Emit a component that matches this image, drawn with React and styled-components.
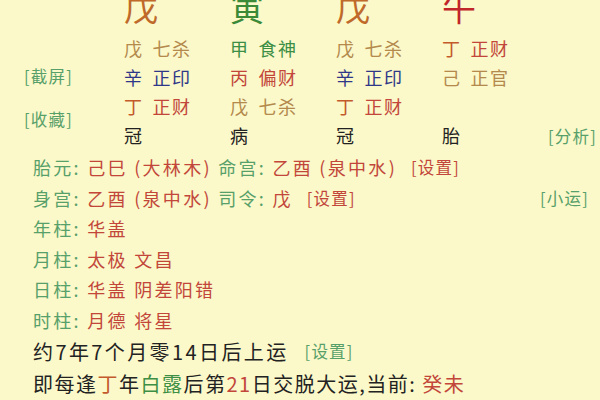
import React from 'react';
import styled, { createGlobalStyle } from 'styled-components';

const C = {
  bg: '#fbf8c9',
  green: '#57a06a',
  deepGreen: '#3d8f45',
  red: '#c2463a',
  orange: '#c25a2c',
  brown: '#b3894c',
  blue: '#2f3788',
  black: '#222222',
  headOrange: '#bf6a2a',
  headGreen: '#3b8a38',
  headRed: '#c0262a',
};

const Global = createGlobalStyle`
  html, body { margin: 0; padding: 0; background: ${C.bg}; }
  body {
    width: 600px; height: 400px; overflow: hidden;
    font-family: "Noto Sans CJK SC", "Noto Sans", sans-serif;
  }
`;

const Page = styled.div`
  width: 600px;
  height: 400px;
  overflow: hidden;
  background: ${C.bg};
`;

const Chart = styled.div`
  display: grid;
  grid-template-columns: 100px repeat(4, 106px) 1fr;
  grid-template-rows: 44px repeat(4, 29px);
  padding: 0 11px 0 24px;
  margin-top: -10px;
`;

const Head = styled.div`
  font-size: 34px;
  line-height: 34px;
  color: ${(p) => p.$c};
  grid-row: 1;
  grid-column: ${(p) => p.$col};
`;

const Cell = styled.div`
  display: flex;
  gap: 9px;
  font-size: 18px;
  letter-spacing: 1.5px;
  line-height: 29px;
  white-space: nowrap;
  grid-row: ${(p) => p.$row};
  grid-column: ${(p) => p.$col};
`;

const Tint = styled.span`
  color: ${(p) => p.$c};
`;

const SideTools = styled.div`
  grid-column: 1;
  grid-row: 2 / span 4;
  display: flex;
  flex-direction: column;
  gap: 21px;
  padding-top: 31px;
`;

const Tag = styled.span`
  font-size: 16.5px;
  line-height: 22px;
  letter-spacing: 1.2px;
  color: ${(p) => p.$c || C.green};
  white-space: nowrap;
`;

const CornerTag = styled.div`
  grid-column: 6;
  grid-row: 5;
  justify-self: end;
  align-self: center;
`;

const Info = styled.div`
  display: flex;
  flex-direction: column;
  padding: 0 11px 0 33px;
  margin-top: 2px;
`;

const InfoRow = styled.div`
  display: flex;
  justify-content: space-between;
  align-items: center;
  height: 30.5px;
  white-space: nowrap;
`;

const Line = styled.div`
  font-size: 18px;
  letter-spacing: 2.3px;
  color: ${C.red};
  display: flex;
  align-items: center;
  gap: 14px;
`;

const Label = styled.span`
  color: ${C.green};
`;

const BigRow = styled.div`
  display: flex;
  align-items: center;
  gap: 16px;
  height: 32px;
  white-space: nowrap;
`;

const BigText = styled.span`
  font-size: 20px;
  letter-spacing: ${(p) => p.$ls || '1.5px'};
  color: ${C.black};
`;

const heads = [
  { t: '戊', c: C.headOrange },
  { t: '寅', c: C.headGreen },
  { t: '戊', c: C.headOrange },
  { t: '午', c: C.headRed },
];

const rows = [
  [
    { s: '戊', g: '七杀', c: C.brown, gc: C.brown },
    { s: '甲', g: '食神', c: C.deepGreen, gc: C.deepGreen },
    { s: '戊', g: '七杀', c: C.brown, gc: C.brown },
    { s: '丁', g: '正财', c: C.orange, gc: C.red },
  ],
  [
    { s: '辛', g: '正印', c: C.blue, gc: C.blue },
    { s: '丙', g: '偏财', c: C.red, gc: C.red },
    { s: '辛', g: '正印', c: C.blue, gc: C.blue },
    { s: '己', g: '正官', c: C.brown, gc: C.brown },
  ],
  [
    { s: '丁', g: '正财', c: C.orange, gc: C.red },
    { s: '戊', g: '七杀', c: C.brown, gc: C.brown },
    { s: '丁', g: '正财', c: C.orange, gc: C.red },
    null,
  ],
];

const phases = ['冠', '病', '冠', '胎'];

const shensha = [
  ['年柱', '华盖'],
  ['月柱', '太极 文昌'],
  ['日柱', '华盖 阴差阳错'],
  ['时柱', '月德 将星'],
];

export default function App() {
  return (
    <Page>
      <Global />
      <Chart>
        {heads.map((h, i) => (
          <Head key={i} $col={i + 2} $c={h.c}>{h.t}</Head>
        ))}
        {rows.map((r, ri) =>
          r.map((cell, ci) =>
            cell ? (
              <Cell key={`${ri}-${ci}`} $row={ri + 2} $col={ci + 2}>
                <Tint $c={cell.c}>{cell.s}</Tint>
                <Tint $c={cell.gc}>{cell.g}</Tint>
              </Cell>
            ) : null
          )
        )}
        {phases.map((p, i) => (
          <Cell key={`p${i}`} $row={5} $col={i + 2}>
            <Tint $c={C.black}>{p}</Tint>
          </Cell>
        ))}
        <SideTools>
          <Tag>[截屏]</Tag>
          <Tag>[收藏]</Tag>
        </SideTools>
        <CornerTag>
          <Tag>[分析]</Tag>
        </CornerTag>
      </Chart>
      <Info>
        <InfoRow>
          <Line>
            <span><Label>胎元:</Label> 己巳 (大林木) <Label>命宫:</Label> 乙酉 (泉中水)</span>
            <Tag $c={C.red}>[设置]</Tag>
          </Line>
        </InfoRow>
        <InfoRow>
          <Line>
            <span><Label>身宫:</Label> 乙酉 (泉中水) <Label>司令:</Label> 戊</span>
            <Tag $c={C.red}>[设置]</Tag>
          </Line>
          <Tag>[小运]</Tag>
        </InfoRow>
        {shensha.map(([k, v]) => (
          <InfoRow key={k}>
            <Line>
              <span><Label>{k}:</Label> {v}</span>
            </Line>
          </InfoRow>
        ))}
        <BigRow>
          <BigText $ls="2.4px">约7年7个月零14日后上运</BigText>
          <Tag>[设置]</Tag>
        </BigRow>
        <BigRow>
          <BigText>
            即每逢<Tint $c={C.orange}>丁</Tint>年<Tint $c={C.deepGreen}>白露</Tint>后第<Tint $c={C.red}>21</Tint>日交脱大运,当前: <Tint $c={C.red}>癸未</Tint>
          </BigText>
        </BigRow>
      </Info>
    </Page>
  );
}
